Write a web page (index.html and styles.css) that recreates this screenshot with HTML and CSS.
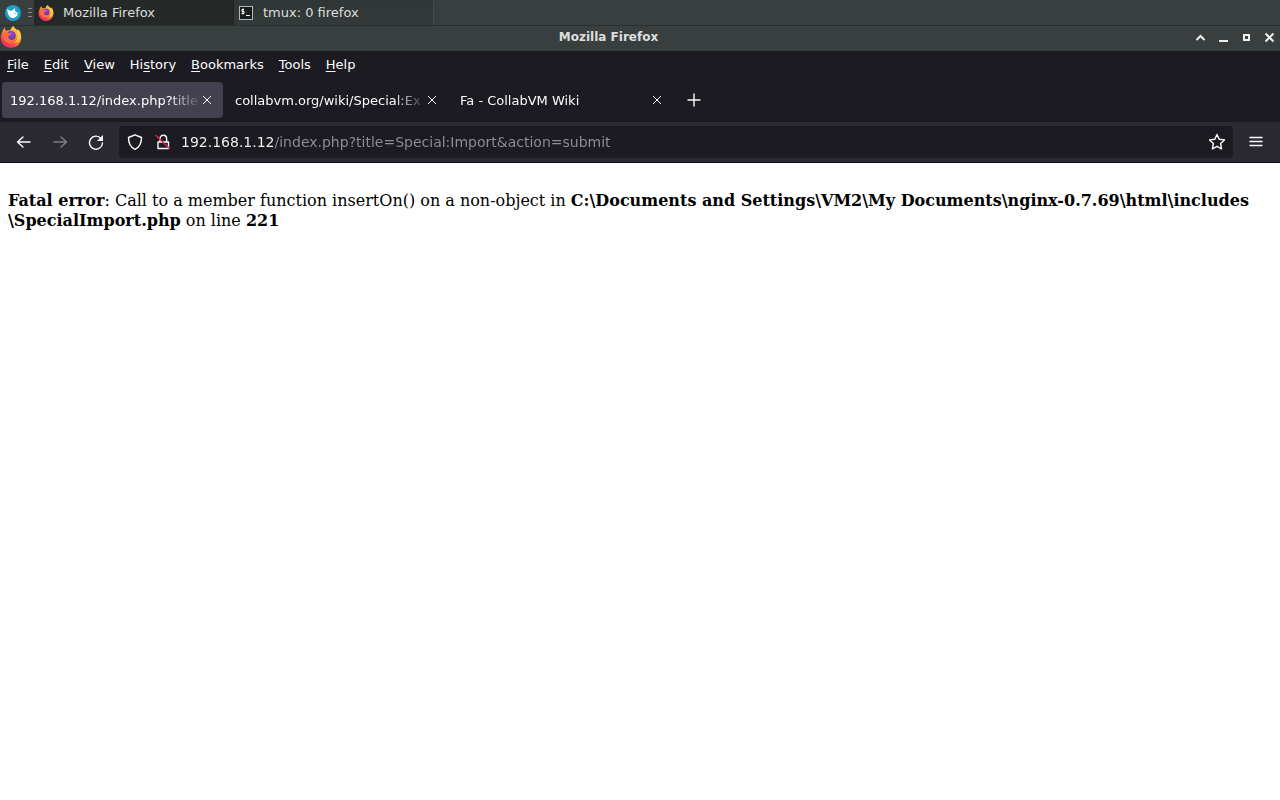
FILE: index.html
```html
<!DOCTYPE html>
<html lang="en">
<head>
    <meta charset="UTF-8">
    <meta name="viewport" content="width=device-width, initial-scale=1.0">
    <title>Mozilla Firefox</title>
    <link rel="stylesheet" href="styles.css">
</head>
<body>
    <svg class="defs" aria-hidden="true">
        <defs>
            <linearGradient id="flame" x1="0.85" y1="0.05" x2="0.2" y2="0.95">
                <stop offset="0" stop-color="#ffe04a"/>
                <stop offset="0.4" stop-color="#ff9a35"/>
                <stop offset="0.75" stop-color="#fa4550"/>
                <stop offset="1" stop-color="#e8286e"/>
            </linearGradient>
            <radialGradient id="globe" cx="0.5" cy="0.3" r="0.8">
                <stop offset="0" stop-color="#9a4fe0"/>
                <stop offset="1" stop-color="#5a2a9c"/>
            </radialGradient>
            <symbol id="firefox" viewBox="0 0 32 32">
                <path fill="url(#flame)" d="M3 9C4 6 5 4 7 2c0 2 1 4 2 5 2-1 4-1 6-1 1-3 2-5 5-6 0 3 3 4 6 7 0-1 0-2-1-3 4 4 6 8 6 13a15 15 0 0 1-30 0c0-3 1-6 2-8z"/>
                <circle cx="16" cy="14" r="7" fill="url(#globe)"/>
                <path fill="#ff7038" d="M4 10c3-2 6-2 8 0l4 1c0 2-3 2-4 4 0 4 3 6 6 5 3 0 5-2 6-4 0 6-4 9-9 9-7 0-12-7-11-15z"/>
                <path fill="#ffc63f" d="M20 1c0 4 4 5 5 9 2 5 0 11-4 15 9-2 11-10 8-17l-3-3v2c-2-2-5-3-6-6z"/>
            </symbol>
            <symbol id="close" viewBox="0 0 12 12">
                <path d="M2 2l8 8M10 2l-8 8" fill="none" stroke="currentColor" stroke-width="1"/>
            </symbol>
        </defs>
    </svg>

    <!-- Desktop panel -->
    <div class="panel">
        <button class="start-btn" aria-label="Applications">
            <svg width="16" height="16" viewBox="0 0 16 16">
                <circle cx="8" cy="8" r="8" fill="#1ba0c8"/>
                <path fill="#fff" d="M2 4l4 2 2-1 2-2v3l3 2-1 3c-2 2-5 3-7 1L3 9z"/>
                <path fill="none" stroke="#52c4df" d="M9 8l2 1"/>
            </svg>
        </button>
        <span class="handle"></span>
        <button class="task active"><svg class="task-icon"><use href="#firefox"/></svg>Mozilla Firefox</button>
        <button class="task">
            <svg class="task-icon" viewBox="0 0 16 16">
                <rect x="1.5" y="1.5" width="13" height="13" fill="#171c1d" stroke="#b4b8b8"/>
                <path fill="none" stroke="#fff" d="M6 4.500H4v2h2v2H3.500M5 3.500v6M8 10.500h4"/>
            </svg>tmux: 0 firefox</button>
    </div>

    <!-- Window title bar -->
    <header class="titlebar">
        <svg class="window-icon"><use href="#firefox"/></svg>
        <h1>Mozilla Firefox</h1>
        <div class="window-btns">
            <button aria-label="Shade"><svg width="11" height="11" viewBox="0 0 11 11"><path d="M1.500 8l4-4 4 4"/></svg></button>
            <button aria-label="Minimize"><svg width="11" height="11" viewBox="0 0 11 11"><path d="M1 9h9"/></svg></button>
            <button aria-label="Maximize"><svg width="11" height="11" viewBox="0 0 11 11"><path d="M3 3h5v5H3z"/></svg></button>
            <button aria-label="Close"><svg width="11" height="11" viewBox="0 0 11 11"><path d="M1.500 1.500l8 8M9.500 1.500l-8 8"/></svg></button>
        </div>
    </header>

    <nav class="menubar">
        <button><u>F</u>ile</button>
        <button><u>E</u>dit</button>
        <button><u>V</u>iew</button>
        <button>Hi<u>s</u>tory</button>
        <button><u>B</u>ookmarks</button>
        <button><u>T</u>ools</button>
        <button><u>H</u>elp</button>
    </nav>

    <div class="tabs">
        <div class="tab selected">
            <button class="tab-label">192.168.1.12/index.php?title</button>
            <button class="tab-close" aria-label="Close tab"><svg width="12" height="12"><use href="#close"/></svg></button>
        </div>
        <div class="tab">
            <button class="tab-label">collabvm.org/wiki/Special:Ex</button>
            <button class="tab-close" aria-label="Close tab"><svg width="12" height="12"><use href="#close"/></svg></button>
        </div>
        <div class="tab">
            <button class="tab-label">Fa - CollabVM Wiki</button>
            <button class="tab-close" aria-label="Close tab"><svg width="12" height="12"><use href="#close"/></svg></button>
        </div>
        <button class="new-tab" aria-label="New tab">
            <svg width="16" height="16" viewBox="0 0 16 16"><path d="M8 2v12M2 8h12"/></svg>
        </button>
    </div>

    <div class="toolbar">
        <button class="tool" aria-label="Back"><svg width="16" height="16" viewBox="0 0 16 16"><path d="M14 8H1.500M7 3L1.500 8 7 13"/></svg></button>
        <button class="tool" aria-label="Forward" disabled><svg width="16" height="16" viewBox="0 0 16 16"><path d="M2 8h12.500M9 3l5.500 5L9 13"/></svg></button>
        <button class="tool" aria-label="Reload"><svg width="16" height="16" viewBox="0 0 16 16"><path d="M13 4.500A6.500 6.500 0 1 0 14.500 9"/><path d="M15 1v6H9z" class="solid"/></svg></button>
        <div class="urlbar">
            <svg width="16" height="16" viewBox="0 0 16 16"><path d="M8 .8l6.500 2.700C14.500 9 12 13.500 8 15.300 4 13.500 1.500 9 1.500 3.500z"/></svg>
            <svg width="16" height="16" viewBox="0 0 16 16"><path d="M5 8V4.500a3.300 3.300 0 0 1 6.600 0V8M3 8h10.500v6.500H3z"/><path class="slash" d="M1 1.500l13.500 13"/></svg>
            <input type="text" aria-label="Address" value="192.168.1.12/index.php?title=Special:Import&amp;action=submit">
            <button class="star" aria-label="Bookmark this page"><svg width="18" height="18" viewBox="0 0 18 18"><path d="M9 1.500l2.200 4.800 5.300.6-3.900 3.600 1 5.500L9 13.300 4.400 16l1-5.500L1.500 6.900l5.300-.6z"/></svg></button>
        </div>
        <button class="menu" aria-label="Application menu"><svg width="14" height="14" viewBox="0 0 14 14"><path d="M1 2.500h12M1 6.500h12M1 10.500h12"/></svg></button>
    </div>

    <main>
        <br>
        <b>Fatal error</b>: Call to a member function insertOn() on a non-object in <b>C:\Documents and Settings\VM2\My Documents\nginx-0.7.69\html\includes<wbr>\SpecialImport.php</b> on line <b>221</b>
    </main>
</body>
</html>
```
FILE: styles.css
```css
* {
    box-sizing: border-box;
}

body {
    margin: 0;
    min-height: 100vh;
    background: #fff;
    font-family: "DejaVu Sans", sans-serif;
    font-size: 13px;
    color: #fbfbfe;
}

button {
    font: inherit;
    color: inherit;
    background: none;
    border: none;
    padding: 0;
}

svg {
    display: block;
    flex: none;
}

.defs {
    position: absolute;
    width: 0;
    height: 0;
}

/* Desktop panel */
.panel {
    display: flex;
    align-items: center;
    height: 26px;
    background: #393f3f;
    border-bottom: 1px solid #292e2e;
    color: #dedede;
}

.start-btn {
    padding: 0 5px;
}

.handle {
    width: 4px;
    height: 10px;
    margin: 0 2px;
    background: repeating-linear-gradient(#858989 0 1px, transparent 1px 4px);
}

.task {
    display: flex;
    align-items: center;
    gap: 9px;
    width: 200px;
    height: 25px;
    padding: 0 4px;
    background: linear-gradient(#303636, #343a3a);
    border-right: 1px solid #464c4c;
}

.task.active {
    background: #242928;
    border-color: #1d2222;
}

.task-icon {
    width: 16px;
    height: 16px;
}

/* Title bar */
.titlebar {
    display: flex;
    align-items: center;
    height: 25px;
    padding: 0 5px 3px 0;
    background: #393f3f;
    color: #dedede;
}

.titlebar h1 {
    flex: 1;
    margin: 0;
    font-size: 12px;
    text-align: center;
}

.window-icon {
    width: 22px;
    height: 22px;
}

.window-btns {
    display: flex;
    gap: 12px;
}

.window-btns svg {
    fill: none;
    stroke: #eee;
    stroke-width: 2;
}

/* Menu bar */
.menubar {
    display: flex;
    gap: 15px;
    height: 27px;
    padding: 0 7px;
    background: #1c1b22;
}

.menubar u {
    text-underline-offset: 2px;
}

/* Tabs */
.tabs {
    display: flex;
    align-items: center;
    gap: 4px;
    height: 44px;
    padding: 0 2px;
    background: #1c1b22;
}

.tab {
    display: flex;
    align-items: center;
    width: 221px;
    height: 36px;
    padding: 0 10px 0 8px;
    border-radius: 4px;
}

.tab.selected {
    background: #42414d;
}

.tab-label {
    flex: 1;
    min-width: 0;
    overflow: hidden;
    text-align: left;
    white-space: nowrap;
    mask-image: linear-gradient(to left, transparent, #000 32px);
}

.new-tab {
    margin-left: 9px;
}

.new-tab svg,
.toolbar svg {
    fill: none;
    stroke: #fbfbfe;
    stroke-width: 1.4;
    stroke-linejoin: round;
    stroke-linecap: round;
}

/* Navigation toolbar */
.toolbar {
    display: flex;
    align-items: center;
    height: 41px;
    padding: 0 17px 0 16px;
    background: #2b2a33;
    border-bottom: 1px solid #0c0c0d;
}

.tool {
    margin-right: 20px;
}

.tool:disabled {
    opacity: 0.4;
}

.toolbar .solid {
    fill: #fbfbfe;
    stroke: none;
}

.toolbar .slash {
    stroke: #e22850;
}

.urlbar {
    display: flex;
    flex: 1;
    align-items: center;
    gap: 12px;
    height: 32px;
    margin-left: -5px;
    padding: 0 7px 0 8px;
    background: #1c1b22;
    border-radius: 4px;
}

.urlbar input {
    flex: 1;
    min-width: 0;
    height: 32px;
    margin-left: -2px;
    padding: 0;
    border: none;
    outline: none;
    font: inherit;
    font-size: 14px;
    color: transparent;
    /* host part stays bright, the rest of the address is dimmed */
    background: linear-gradient(to right, #fbfbfe 93px, #8f8f96 93px);
    background-clip: text;
}

.menu {
    margin-left: 16px;
}

/* Page content */
main {
    padding: 8px;
    font-family: "DejaVu Serif", serif;
    font-size: 16px;
    line-height: 20px;
    color: #000;
}
```
